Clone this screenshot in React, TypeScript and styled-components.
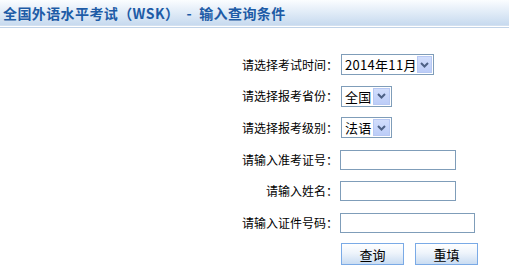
import styled, { createGlobalStyle } from "styled-components";

const GlobalStyle = createGlobalStyle`
  html, body {
    margin: 0;
    padding: 0;
    background: #ffffff;
  }
  body {
    font-family: "Noto Sans CJK SC", "Liberation Sans", sans-serif;
    font-size: 12px;
    color: #000;
  }
`;

interface FieldProps {
  width: number;
}

const SelectBox = ({ value, width }: { value: string; width: number }) => (
  <Select width={width}>
    <SelectValue>{value}</SelectValue>
    <ArrowBox>
      <svg width="9" height="6" viewBox="0 0 9 6">
        <path d="M1 1 L4.5 4.5 L8 1" stroke="#4d6185" strokeWidth="2" fill="none" />
      </svg>
    </ArrowBox>
  </Select>
);

const App = () => {
  return (
    <>
      <GlobalStyle />
      <Header>
        <Title>全国外语水平考试（WSK）  -  输入查询条件</Title>
      </Header>
      <HeaderRule />
      <Form>
        <Label>请选择考试时间：</Label>
        <Cell>
          <SelectBox value="2014年11月" width={93} />
        </Cell>

        <Label>请选择报考省份：</Label>
        <Cell>
          <SelectBox value="全国" width={51} />
        </Cell>

        <Label>请选择报考级别：</Label>
        <Cell>
          <SelectBox value="法语" width={51} />
        </Cell>

        <Label>请输入准考证号：</Label>
        <Cell>
          <TextInput width={116} />
        </Cell>

        <Label>请输入姓名：</Label>
        <Cell>
          <TextInput width={116} />
        </Cell>

        <Label>请输入证件号码：</Label>
        <Cell>
          <TextInput width={135} />
        </Cell>

        <span />
        <Buttons>
          <Button>查询</Button>
          <Button>重填</Button>
        </Buttons>
      </Form>
    </>
  );
};

const Header = styled.div`
  height: 25px;
  background: linear-gradient(to bottom, #fbfdff 0%, #e3edf8 45%, #c7daef 100%);
  display: flex;
  align-items: center;
  padding-left: 3px;
`;

const Title = styled.h1`
  margin: 0;
  font-size: 14px;
  font-weight: bold;
  color: #1d5ba6;
  letter-spacing: 0.4px;
  white-space: pre;
`;

const HeaderRule = styled.div`
  height: 1px;
  border-top: 1px solid #d3e1f0;
  border-bottom: 1px solid #c1d3e8;
  margin-bottom: 21px;
`;

const Form = styled.div`
  display: grid;
  grid-template-columns: 100px auto;
  grid-auto-rows: 31.6px;
  column-gap: 2px;
  margin-left: 238px;
  align-items: center;
`;

const Label = styled.span`
  text-align: right;
  white-space: nowrap;
  font-size: 12px;
  line-height: 14px;
`;

const Cell = styled.div`
  display: flex;
  align-items: center;
`;

const Select = styled.div<FieldProps>`
  box-sizing: border-box;
  width: ${(p) => p.width}px;
  height: 21px;
  border: 1px solid #7f9db9;
  display: flex;
  align-items: center;
  justify-content: space-between;
  padding: 0 1px 0 3px;
  margin-left: 1px;
`;

const SelectValue = styled.span`
  font-size: 13px;
  line-height: 15px;
  white-space: nowrap;
  letter-spacing: 0.3px;
`;

const ArrowBox = styled.div`
  box-sizing: border-box;
  width: 17px;
  height: 17px;
  border: 1px solid #b7c8f3;
  background: linear-gradient(to bottom, #d2defc, #bccdf8);
  display: flex;
  align-items: center;
  justify-content: center;
`;

const TextInput = styled.input<FieldProps>`
  box-sizing: border-box;
  width: ${(p) => p.width}px;
  height: 20px;
  border: 1px solid #7f9db9;
  padding: 0 2px;
  margin: 0;
  outline: none;
  background: #fff;
`;

const Buttons = styled.div`
  display: flex;
  gap: 11px;
  margin-left: 1px;
`;

const Button = styled.button`
  box-sizing: border-box;
  width: 63px;
  height: 22px;
  border: 1px solid #7aaae6;
  background: linear-gradient(to bottom, #ffffff 0%, #eef4fb 45%, #c9dcf2 100%);
  font-family: "Noto Sans CJK SC", "Liberation Sans", sans-serif;
  font-size: 13px;
  color: #000;
  padding: 0;
  display: flex;
  align-items: center;
  justify-content: center;
`;

export default App;
